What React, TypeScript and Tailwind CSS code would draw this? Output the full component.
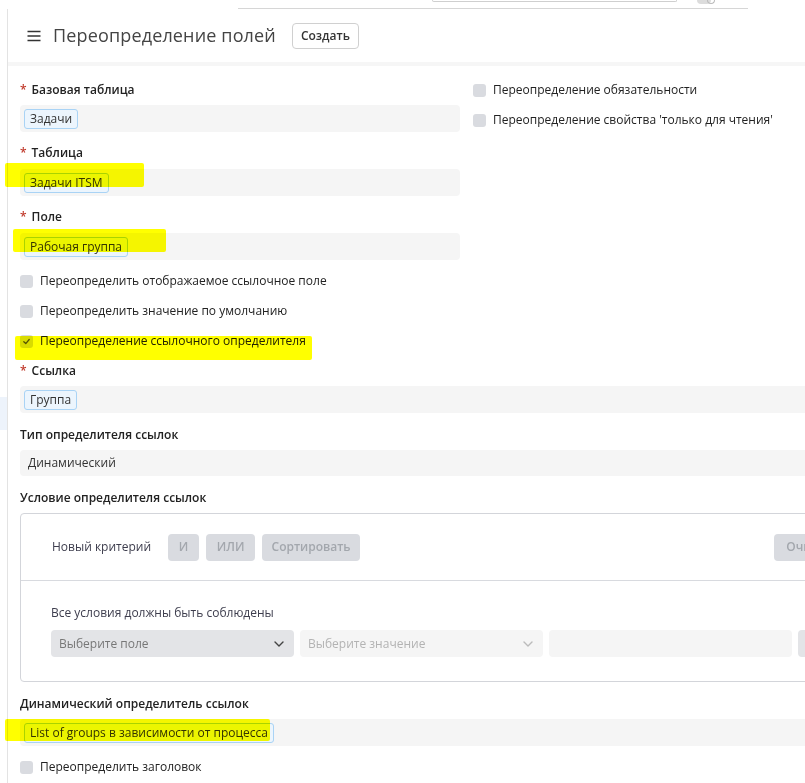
import React from "react";

type ChipProps = { text: string };

function Chip({ text }: ChipProps) {
  return (
    <span className="inline-flex h-[20px] items-center rounded-[3px] border border-[#a9d3f5] bg-[#ecf5fd] px-[5px] text-[12px] leading-none text-[#333]">
      {text}
    </span>
  );
}

function Label({ text, required, className = "" }: { text: string; required?: boolean; className?: string }) {
  return (
    <div className={`flex h-[20px] items-center text-[12px] font-semibold text-[#222] ${className}`}>
      {required && <span className="mr-[5px] text-[#c0392b]">*</span>}
      {text}
    </div>
  );
}

function Check({ text, checked, className = "" }: { text: string; checked?: boolean; className?: string }) {
  return (
    <div className={`flex h-[20px] items-center gap-[7px] text-[12px] text-[#222] ${className}`}>
      <span className="flex h-[13px] w-[13px] items-center justify-center rounded-[3px] bg-[#d9dbe0]">
        {checked && (
          <svg width="9" height="9" viewBox="0 0 10 10" fill="none">
            <path d="M2 5.2 4.2 7.3 8 2.8" stroke="#555" strokeWidth="1.4" strokeLinecap="round" strokeLinejoin="round" />
          </svg>
        )}
      </span>
      <span className="font-medium">{text}</span>
    </div>
  );
}

function Chevron({ color }: { color: string }) {
  return (
    <svg width="10" height="6" viewBox="0 0 10 6" fill="none">
      <path d="M1 1l4 4 4-4" stroke={color} strokeWidth="1.4" strokeLinecap="round" strokeLinejoin="round" />
    </svg>
  );
}

export default function App() {
  return (
    <div className="relative flex h-[783px] w-[805px] flex-col overflow-hidden bg-white font-['Open_Sans',sans-serif]">
      {/* top strip */}
      <div className="flex h-[9px] shrink-0">
        <div className="w-[238px]" />
        <div className="flex h-[9px] w-[510px] border-b border-[#d6d6d6]">
          <div className="ml-[194px] h-[2px] w-[245px] rounded-b-[3px] border border-t-0 border-[#cfcfcf]" />
          <div className="ml-[20px] h-[4px] w-[14px] rounded-b-full bg-[#dcdcdc]" />
          <div className="-ml-[4px] h-[4px] w-[8px] rounded-b-full border border-t-0 border-[#bbb]" />
        </div>
      </div>

      <div className="flex min-h-0 flex-1">
        {/* sidebar edge */}
        <div className="w-[7px] shrink-0 pt-[388px]">
          <div className="h-[33px] bg-[#edf3fb]" />
        </div>

        {/* main */}
        <div className="flex min-w-0 flex-1 flex-col border-l border-[#e3e3e3]">
          <div className="flex h-[53px] shrink-0 items-center pl-[19px]">
            <svg width="14" height="12" viewBox="0 0 14 12" fill="none">
              <path d="M0.5 1.5h13M0.5 6h13M0.5 10.5h13" stroke="#333" strokeWidth="1.6" />
            </svg>
            <span className="ml-[12px] text-[18px] tracking-[0.15px] text-[#444]">Переопределение полей</span>
            <button className="ml-[16px] h-[26px] rounded-[4px] border border-[#d0d0d0] bg-white px-[8px] text-[12px] font-semibold text-[#333]">
              Создать
            </button>
          </div>
          <div className="h-[4px] shrink-0 bg-[#f6f6f6]" />

          <div className="w-[881px] pl-[12px] pt-[14px]">
            <div className="flex gap-[13px]">
              <div className="w-[440px]">
                <Label text="Базовая таблица" required />
                <div className="mt-[5px] flex h-[27px] items-center rounded-[4px] bg-[#f5f5f5] px-[4px]">
                  <Chip text="Задачи" />
                </div>
                <Label text="Таблица" required className="mt-[11px]" />
                <div className="mt-[6px] flex h-[27px] items-center rounded-[4px] bg-[#f5f5f5] px-[4px]">
                  <Chip text="Задачи ITSM" />
                </div>
                <Label text="Поле" required className="mt-[11px]" />
                <div className="mt-[6px] flex h-[27px] items-center rounded-[4px] bg-[#f5f5f5] px-[4px]">
                  <Chip text="Рабочая группа" />
                </div>
              </div>
              <div className="flex-1">
                <Check text="Переопределение обязательности" />
                <Check text="Переопределение свойства 'только для чтения'" className="mt-[10px]" />
              </div>
            </div>

            <Check text="Переопределить отображаемое ссылочное поле" className="mt-[11px]" />
            <Check text="Переопределить значение по умолчанию" className="mt-[10px]" />
            <Check text="Переопределение ссылочного определителя" checked className="mt-[10px]" />

            <Label text="Ссылка" required className="mt-[10px]" />
            <div className="mt-[5px] flex h-[27px] items-center rounded-[4px] bg-[#f5f5f5] px-[4px]">
              <Chip text="Группа" />
            </div>

            <Label text="Тип определителя ссылок" className="mt-[12px]" />
            <div className="mt-[5px] flex h-[26px] items-center rounded-[4px] bg-[#f5f5f5] px-[8px] text-[12px] text-[#333]">
              Динамический
            </div>

            <Label text="Условие определителя ссылок" className="mt-[12px]" />
            <div className="mt-[5px] h-[169px] overflow-hidden rounded-[4px] border border-[#d3d5da]">
              <div className="flex h-[67px] items-center border-b border-[#d8dadf] pl-[31px] pr-[31px]">
                <span className="text-[12px] text-[#3d3d4d]">Новый критерий</span>
                <div className="ml-[17px] flex gap-[7px]">
                  <span className="flex h-[27px] w-[31px] items-center justify-center rounded-[4px] bg-[#d9dbe0] text-[12px] font-semibold text-[#a3a7ad]">И</span>
                  <span className="flex h-[27px] w-[49px] items-center justify-center rounded-[4px] bg-[#d9dbe0] text-[12px] font-semibold text-[#a3a7ad]">ИЛИ</span>
                  <span className="flex h-[27px] w-[98px] items-center justify-center rounded-[4px] bg-[#d9dbe0] text-[12px] font-semibold text-[#a3a7ad]">Сортировать</span>
                </div>
                <span className="ml-auto flex h-[27px] items-center rounded-[4px] bg-[#d9dbe0] px-[12px] text-[12px] font-semibold text-[#a3a7ad]">Очистить</span>
              </div>
              <div className="pl-[30px] pt-[22px]">
                <div className="flex h-[20px] items-center text-[12px] text-[#3d3d4d]">Все условия должны быть соблюдены</div>
                <div className="mt-[7px] flex gap-[6px]">
                  <div className="flex h-[27px] w-[243px] items-center justify-between rounded-[4px] bg-[#e3e4e7] pl-[8px] pr-[10px] text-[12px] text-[#777]">
                    Выберите поле
                    <Chevron color="#444" />
                  </div>
                  <div className="flex h-[27px] w-[243px] items-center justify-between rounded-[4px] bg-[#f5f5f5] pl-[8px] pr-[10px] text-[12px] text-[#b3b3b3]">
                    Выберите значение
                    <Chevron color="#bbb" />
                  </div>
                  <div className="h-[27px] w-[243px] rounded-[4px] bg-[#f5f5f5]" />
                  <div className="h-[27px] w-[60px] rounded-[4px] bg-[#e3e4e7]" />
                </div>
              </div>
            </div>

            <Label text="Динамический определитель ссылок" className="mt-[12px]" />
            <div className="mt-[5px] flex h-[27px] items-center rounded-[4px] bg-[#f5f5f5] px-[4px]">
              <Chip text="List of groups в зависимости от процесса" />
            </div>

            <Check text="Переопределить заголовок" className="mt-[11px]" />
          </div>
        </div>
      </div>

      {/* highlighter marks */}
      <span className="pointer-events-none absolute left-[5px] top-[163px] h-[24px] w-[139px] rounded-[2px] bg-[#ffff00] mix-blend-multiply" />
      <span className="pointer-events-none absolute left-[13px] top-[229px] h-[23px] w-[153px] rounded-[2px] bg-[#ffff00] mix-blend-multiply" />
      <span className="pointer-events-none absolute left-[15px] top-[336px] h-[24px] w-[297px] rounded-[2px] bg-[#ffff00] mix-blend-multiply" />
      <span className="pointer-events-none absolute left-[5px] top-[719px] h-[22px] w-[265px] rounded-[2px] bg-[#ffff00] mix-blend-multiply" />
    </div>
  );
}
